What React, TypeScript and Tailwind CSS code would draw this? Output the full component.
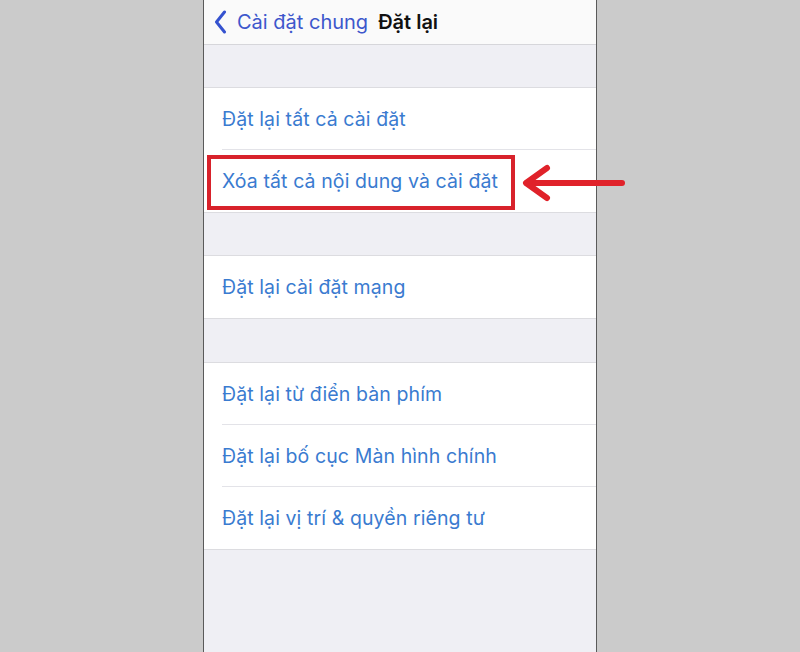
const font = { fontFamily: '"Inter", "Noto Sans", "Liberation Sans", sans-serif' }

const Row = ({ label, last }: { label: string; last?: boolean }) => (
  <div className="h-[62px] pl-[18px] bg-white">
    <div
      className={`h-full flex items-center pt-[2px] text-[19.5px] text-[#3a7bd0] tracking-[0.1px] ${
        last ? "" : "border-b border-[#e3e3e8]"
      }`}
    >
      {label}
    </div>
  </div>
)

const Group = ({ items }: { items: string[] }) => (
  <div className="border-y border-[#dcdce0]">
    {items.map((t, i) => (
      <Row key={t} label={t} last={i === items.length - 1} />
    ))}
  </div>
)

export default function App() {
  return (
    <div className="w-[800px] h-[652px] bg-[#cbcbcb] flex justify-center overflow-hidden" style={font}>
      <div className="relative w-[394px] h-full bg-[#efeff4] border-x border-[#5a5a5a] flex flex-col">
        {/* Nav bar */}
        <div className="h-[45px] bg-[#fafafa] border-b border-[#d6d6da] flex items-center pl-[10px] gap-[10px]">
          <svg width="13" height="24" viewBox="0 0 13 24" fill="none">
            <path d="M10.5 2L2.5 12l8 10" stroke="#3552cf" strokeWidth="3" strokeLinecap="round" strokeLinejoin="round" />
          </svg>
          <span className="text-[20px] text-[#3d57cc] leading-none">Cài đặt chung</span>
          <span className="text-[20px] font-semibold text-[#111] leading-none">Đặt lại</span>
        </div>

        <div className="h-[42px]" />
        <Group items={["Đặt lại tất cả cài đặt", "Xóa tất cả nội dung và cài đặt"]} />
        <div className="h-[42px]" />
        <Group items={["Đặt lại cài đặt mạng"]} />
        <div className="h-[43px]" />
        <Group items={["Đặt lại từ điển bàn phím", "Đặt lại bố cục Màn hình chính", "Đặt lại vị trí & quyền riêng tư"]} />

        {/* annotation box */}
        <div className="absolute left-[3px] top-[155px] w-[308px] h-[55px] border-[4px] border-[#d8222b]" />
      </div>

      {/* annotation arrow */}
      <svg className="absolute left-[518px] top-[163px]" width="112" height="40" viewBox="0 0 112 40" fill="none">
        <path d="M104 20H9" stroke="#e0222a" strokeWidth="6" strokeLinecap="round" />
        <path d="M29 5L8 20l21 15" stroke="#e0222a" strokeWidth="6" strokeLinecap="round" strokeLinejoin="round" />
      </svg>
    </div>
  )
}
